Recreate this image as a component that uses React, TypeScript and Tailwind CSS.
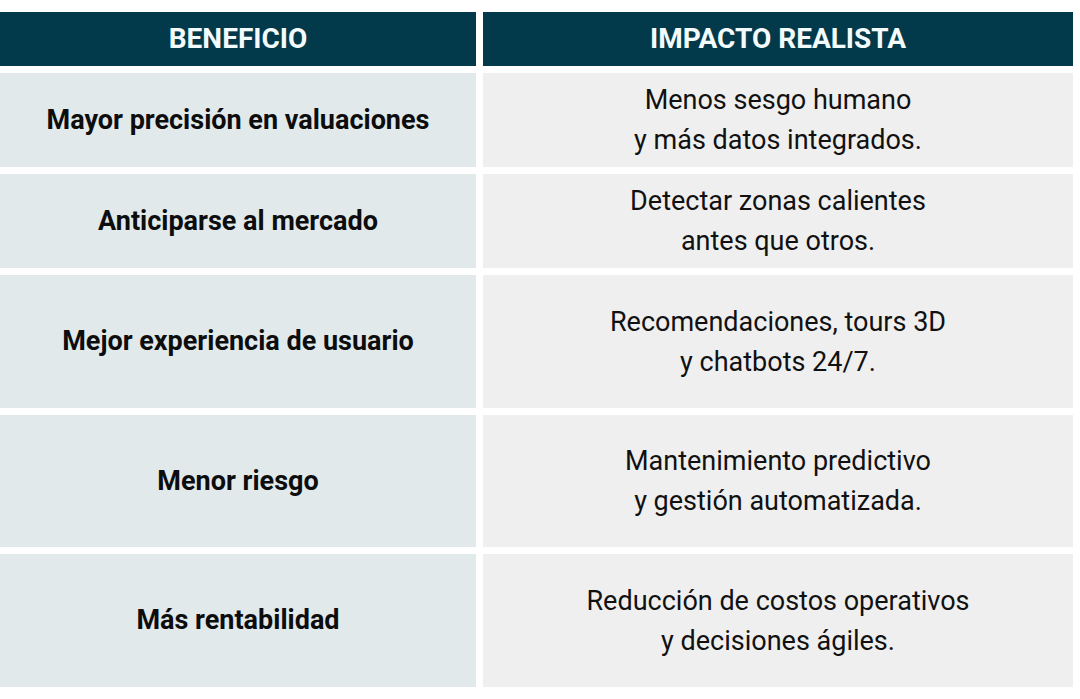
const ROWS: { benefit: string; impact: [string, string]; h: string }[] = [
  {
    benefit: "Mayor precisión en valuaciones",
    impact: ["Menos sesgo humano", "y más datos integrados."],
    h: "h-[94px]",
  },
  {
    benefit: "Anticiparse al mercado",
    impact: ["Detectar zonas calientes", "antes que otros."],
    h: "h-[94px]",
  },
  {
    benefit: "Mejor experiencia de usuario",
    impact: ["Recomendaciones, tours 3D", "y chatbots 24/7."],
    h: "h-[133px]",
  },
  {
    benefit: "Menor riesgo",
    impact: ["Mantenimiento predictivo", "y gestión automatizada."],
    h: "h-[132px]",
  },
  {
    benefit: "Más rentabilidad",
    impact: ["Reducción de costos operativos", "y decisiones ágiles."],
    h: "h-[133px]",
  },
];

export default function App() {
  return (
    <div
      className="h-[699px] w-[1080px] bg-white pt-[12px] pr-[7px]"
      style={{ fontFamily: "Roboto, 'Liberation Sans', sans-serif" }}
    >
      <div className="flex flex-col gap-[7px]">
        {/* header */}
        <div className="grid h-[54px] grid-cols-[476px_590px] gap-x-[7px]">
          <div className="flex items-center justify-center bg-[#033a4b] text-[28px] font-bold text-[#f4fbfd]">
            BENEFICIO
          </div>
          <div className="flex items-center justify-center bg-[#033a4b] text-[28px] font-bold text-[#f4fbfd]">
            IMPACTO REALISTA
          </div>
        </div>

        {ROWS.map((r) => (
          <div
            key={r.benefit}
            className={`grid grid-cols-[476px_590px] gap-x-[7px] ${r.h}`}
          >
            <div className="flex items-center justify-center bg-[#e1e9eb] text-[27px] font-bold text-[#0d0d0d]">
              {r.benefit}
            </div>
            <div className="flex flex-col items-center justify-center bg-[#efefef] pt-[-1px] text-[27px] leading-[40px] text-[#111]">
              <span>{r.impact[0]}</span>
              <span>{r.impact[1]}</span>
            </div>
          </div>
        ))}
      </div>
    </div>
  );
}
